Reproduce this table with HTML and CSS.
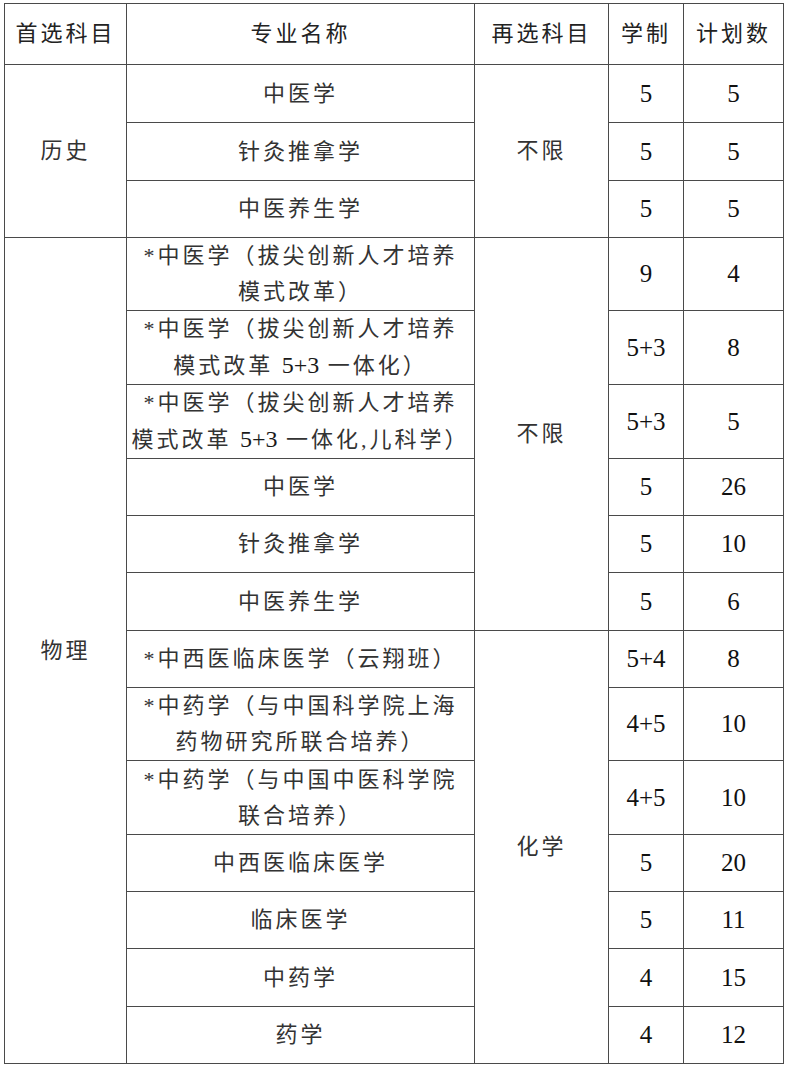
FILE: index.html
```html
<!DOCTYPE html>
<html lang="zh-CN">
<head>
<meta charset="utf-8">
<link rel="stylesheet" href="styles.css">
</head>
<body>
<table class="plan">
  <colgroup>
    <col class="c1"><col class="c2"><col class="c3"><col class="c4"><col class="c5">
  </colgroup>
  <thead>
    <tr class="h-head">
      <th>首选科目</th><th>专业名称</th><th>再选科目</th><th>学制</th><th class="last">计划数</th>
    </tr>
  </thead>
  <tbody>
    <tr class="h58">
      <td rowspan="3">历史</td><td>中医学</td><td rowspan="3">不限</td><td class="num">5</td><td class="num last">5</td>
    </tr>
    <tr class="h58"><td>针灸推拿学</td><td class="num">5</td><td class="num last">5</td></tr>
    <tr class="h57"><td>中医养生学</td><td class="num">5</td><td class="num last">5</td></tr>

    <tr class="h73">
      <td rowspan="13">物理</td>
      <td class="two">*中医学（拔尖创新人才培养<br>模式改革）</td>
      <td rowspan="6">不限</td><td class="num">9</td><td class="num last">4</td>
    </tr>
    <tr class="h74"><td class="two">*中医学（拔尖创新人才培养<br>模式改革 <span class="lat">5+3</span> 一体化）</td><td class="num">5+3</td><td class="num last">8</td></tr>
    <tr class="h74"><td class="two">*中医学（拔尖创新人才培养<br>模式改革 <span class="lat">5+3</span> 一体化,儿科学）</td><td class="num">5+3</td><td class="num last">5</td></tr>
    <tr class="h57"><td>中医学</td><td class="num">5</td><td class="num last">26</td></tr>
    <tr class="h57"><td>针灸推拿学</td><td class="num">5</td><td class="num last">10</td></tr>
    <tr class="h58"><td>中医养生学</td><td class="num">5</td><td class="num last">6</td></tr>

    <tr class="h57">
      <td>*中西医临床医学（云翔班）</td>
      <td rowspan="7">化学</td><td class="num">5+4</td><td class="num last">8</td>
    </tr>
    <tr class="h73"><td class="two">*中药学（与中国科学院上海<br>药物研究所联合培养）</td><td class="num">4+5</td><td class="num last">10</td></tr>
    <tr class="h74"><td class="two">*中药学（与中国中医科学院<br>联合培养）</td><td class="num">4+5</td><td class="num last">10</td></tr>
    <tr class="h57"><td>中西医临床医学</td><td class="num">5</td><td class="num last">20</td></tr>
    <tr class="h57"><td>临床医学</td><td class="num">5</td><td class="num last">11</td></tr>
    <tr class="h58"><td>中药学</td><td class="num">4</td><td class="num last">15</td></tr>
    <tr class="h57"><td>药学</td><td class="num">4</td><td class="num last">12</td></tr>
  </tbody>
</table>
</body>
</html>
```

FILE: styles.css
```css
html, body {
  margin: 0;
  padding: 0;
  background: #ffffff;
}

body {
  padding: 3px 0 0 4px;
}

.plan {
  border-collapse: collapse;
  table-layout: fixed;
  width: 779px;
  font-family: "Liberation Serif", "Noto Sans CJK SC", serif;
  font-size: 22px;
  letter-spacing: 3px;
  color: #333333;
}

.c1 { width: 122px; }
.c2 { width: 348px; }
.c3 { width: 134px; }
.c4 { width: 75px; }
.c5 { width: 100px; }

.plan th,
.plan td {
  border: 1px solid #4a4a4a;
  padding: 0;
  text-align: center;
  vertical-align: middle;
  font-weight: normal;
  line-height: 36px;
  white-space: nowrap;
}

.plan .last {
  border-left-color: #9a9a9a;
}

.plan th {
  color: #222222;
}

.h-head { height: 61px; }
.h57 { height: 57px; }
.h58 { height: 58px; }
.h73 { height: 73px; }
.h74 { height: 74px; }

.plan td.num {
  font-size: 25px;
  letter-spacing: 0;
  color: #111111;
}

.lat {
  font-size: 24px;
  letter-spacing: 0;
  color: #1a1a1a;
}

.two {
  line-height: 36px;
}
```
